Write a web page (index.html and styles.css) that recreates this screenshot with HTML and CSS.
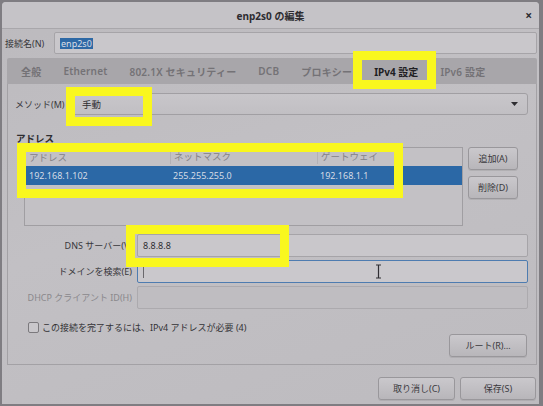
FILE: index.html
```html
<!DOCTYPE html>
<html lang="ja">
<head>
<meta charset="utf-8">
<title>enp2s0 の編集</title>
<link rel="stylesheet" href="styles.css">
</head>
<body>
<div class="dialog">
  <div class="titlebar">
    <span class="title">enp2s0 の編集</span>
    <span class="close">×</span>
  </div>
  <div class="name-row">
    <span class="name-label">接続名(N)</span>
    <div class="entry name-entry"><span class="selected-text">enp2s0</span></div>
  </div>
  <div class="notebook">
    <div class="tabs">
      <span class="tab">全般</span>
      <span class="tab">Ethernet</span>
      <span class="tab">802.1X セキュリティー</span>
      <span class="tab">DCB</span>
      <span class="tab">プロキシー</span>
      <span class="tab active">IPv4 設定</span>
      <span class="tab">IPv6 設定</span>
    </div>
    <div class="panel">
      <div class="method-row">
        <span class="method-label">メソッド(M)</span>
        <div class="combo">
          <span>手動</span>
          <svg class="arrow" width="7" height="4" viewBox="0 0 7 4"><path d="M0 0 H7 L3.5 4 Z" fill="#2e2d31"/></svg>
        </div>
      </div>
      <div class="section-title">アドレス</div>
      <div class="addr-area">
        <div class="addr-table">
          <div class="trow thead">
            <span>アドレス</span><span>ネットマスク</span><span>ゲートウェイ</span>
          </div>
          <div class="trow selected">
            <span>192.168.1.102</span><span>255.255.255.0</span><span>192.168.1.1</span>
          </div>
        </div>
        <div class="side-buttons">
          <button class="btn">追加(A)</button>
          <button class="btn">削除(D)</button>
        </div>
      </div>
      <div class="form-grid">
        <span class="flabel">DNS サーバー(V)</span>
        <div class="entry"><span class="etext">8.8.8.8</span></div>
        <span class="flabel">ドメインを検索(E)</span>
        <div class="entry focused"><span class="caret"></span></div>
        <span class="flabel disabled">DHCP クライアント ID(H)</span>
        <div class="entry disabled-entry"></div>
      </div>
      <div class="check-row">
        <span class="checkbox"></span>
        <span class="check-label">この接続を完了するには、IPv4 アドレスが必要 (4)</span>
      </div>
      <div class="route-row">
        <button class="btn route-btn">ルート(R)…</button>
      </div>
    </div>
  </div>
  <div class="footer">
    <button class="btn cancel-btn">取り消し(C)</button>
    <button class="btn save-btn">保存(S)</button>
  </div>
</div>

<svg class="ibeam" width="7" height="15" viewBox="0 0 7 15"><path d="M1 1 H6 M3.5 1 V14 M1 14 H6" stroke="#2f2e33" stroke-width="1.2" fill="none"/></svg>

<div class="hl hl-ipv4"></div>
<div class="hl hl-method"></div>
<div class="hl hl-table"></div>
<div class="hl hl-dns"></div>
</body>
</html>
```

FILE: styles.css
```css
* { box-sizing: border-box; }

html, body {
  margin: 0;
  padding: 0;
}

body {
  width: 543px;
  height: 406px;
  overflow: hidden;
  background: #7f7d82;
  font-family: "Noto Sans", "Noto Sans CJK JP", sans-serif;
  font-size: 9px;
  color: #3a393d;
  position: relative;
}

.dialog {
  margin: 2px 0 0 2px;
  width: 537px;
  height: 402px;
  background: linear-gradient(160deg, #bcbabe 0%, #c2c0c4 45%, #bdbbbf 100%);
  border-radius: 4px 4px 0 0;
  display: flex;
  flex-direction: column;
}

.titlebar {
  height: 27px;
  flex: none;
  border-bottom: 1px solid #a9a7ab;
  background: #c5c3c7;
  border-radius: 4px 4px 0 0;
  display: flex;
  align-items: center;
  justify-content: center;
  position: relative;
}

.title {
  font-size: 10px;
  font-weight: 700;
  color: #2d2c31;
}

.close {
  position: absolute;
  right: 7px;
  top: 5px;
  font-size: 12px;
  font-weight: 700;
  color: #2d2c31;
}

.name-row {
  display: flex;
  align-items: center;
  margin: 3px 2px 0 3px;
  height: 22px;
  flex: none;
}

.name-label {
  width: 49px;
  flex: none;
  color: #38373b;
}

.entry {
  flex: 1;
  height: 100%;
  background: #c9c7cb;
  border: 1px solid #a6a4a8;
  border-radius: 2px;
  display: flex;
  align-items: center;
  padding-left: 5px;
  position: relative;
}

.selected-text {
  background: #2e69a5;
  color: #d8dde6;
  padding: 0 1px;
  line-height: 11px;
}

.notebook {
  margin: 4px 2px 0 5px;
  flex: none;
  display: flex;
  flex-direction: column;
}

.tabs {
  height: 26px;
  background: #a8a6aa;
  display: flex;
  align-items: center;
  gap: 22px;
  padding-left: 14px;
  border-radius: 2px 2px 0 0;
}

.tab {
  font-size: 10px;
  font-weight: 600;
  color: #747276;
  letter-spacing: 0.2px;
}

.tab.active {
  color: #1f1e23;
  font-weight: 700;
  letter-spacing: 0;
}

.panel {
  border: 1px solid #a3a1a5;
  border-top: none;
  padding: 9px 8px 7px 7px;
  display: flex;
  flex-direction: column;
}

.method-row {
  display: flex;
  align-items: center;
  height: 22px;
}

.method-label {
  width: 55px;
  flex: none;
  color: #3a393d;
}

.combo {
  flex: 1;
  height: 100%;
  background: linear-gradient(#c8c6ca, #c1bfc3);
  border: 1px solid #a19fa3;
  border-radius: 3px;
  display: flex;
  align-items: center;
  justify-content: space-between;
  padding: 0 9px 0 11px;
  font-size: 9.5px;
  color: #2f2e32;
}

.section-title {
  margin-top: 18px;
  height: 12px;
  line-height: 12px;
  font-weight: 700;
  font-size: 9.5px;
  color: #2e2d31;
  padding-left: 1px;
}

.addr-area {
  margin-top: 2px;
  display: flex;
  gap: 5px;
  height: 79px;
  padding-left: 9px;
}

.addr-table {
  width: 439px;
  height: 100%;
  border: 1px solid #a09ea2;
  background: #c3c1c5;
}

.trow {
  display: grid;
  grid-template-columns: 145px 147px 1fr;
  height: 18px;
  align-items: center;
}

.trow span {
  padding-left: 4px;
}

.thead {
  color: #838185;
  font-size: 9.5px;
}

.thead span + span {
  border-left: 1px solid #b3b1b5;
  padding-left: 3px;
  height: 14px;
  line-height: 14px;
}

.trow.selected {
  background: #2b68a6;
  color: #d5dbe5;
  height: 19px;
}

.trow.selected span + span {
  padding-left: 3px;
}

.side-buttons {
  display: flex;
  flex-direction: column;
  gap: 6px;
  width: 50px;
}

.btn {
  font-family: "Noto Sans", "Noto Sans CJK JP", sans-serif;
  font-size: 9px;
  color: #3a393d;
  height: 23px;
  background: linear-gradient(#cac8cc, #b8b6ba);
  border: 1px solid #99979b;
  border-radius: 3px;
  box-shadow: 0 1px 0 rgba(0, 0, 0, 0.08);
  padding: 0;
  margin: 0;
}

.form-grid {
  margin-top: 8px;
  display: grid;
  grid-template-columns: 118px 1fr;
  grid-auto-rows: 23px;
  column-gap: 4px;
  row-gap: 3px;
  align-items: center;
}

.flabel {
  text-align: right;
  color: #39383c;
  white-space: nowrap;
  padding-right: 1px;
}

.flabel.disabled {
  color: #8a888c;
}

.etext {
  color: #2f2e32;
}

.entry.focused {
  border-color: #4e7cb0;
  background: #cac8cc;
}

.caret {
  width: 1px;
  height: 12px;
  background: #6a686c;
}

.entry.disabled-entry {
  background: #bfbdc1;
  border-color: #acaaae;
}

.check-row {
  margin-top: 12px;
  height: 12px;
  display: flex;
  align-items: center;
  gap: 3px;
  padding-left: 13px;
}

.checkbox {
  width: 11px;
  height: 11px;
  border: 1px solid #7b797d;
  border-radius: 2px;
  background: #c9c7cb;
  flex: none;
}

.check-label {
  color: #333236;
}

.route-row {
  margin-top: 1px;
  display: flex;
  justify-content: flex-end;
  padding-right: 1px;
}

.route-btn {
  width: 78px;
}

.footer {
  margin-top: 12px;
  display: flex;
  justify-content: flex-end;
  gap: 5px;
  padding-right: 3px;
}

.cancel-btn { width: 77px; }
.save-btn { width: 76px; }

.ibeam {
  position: absolute;
  left: 375px;
  top: 264px;
}

.hl {
  position: absolute;
  border: 9px solid #f9f71e;
}

.hl-ipv4 {
  left: 353px;
  top: 51px;
  width: 83px;
  height: 38px;
}

.hl-method {
  left: 66px;
  top: 87px;
  width: 86px;
  height: 39px;
}

.hl-table {
  left: 17px;
  top: 143px;
  width: 386px;
  height: 55px;
}

.hl-dns {
  left: 126px;
  top: 225px;
  width: 163px;
  height: 42px;
}
```
